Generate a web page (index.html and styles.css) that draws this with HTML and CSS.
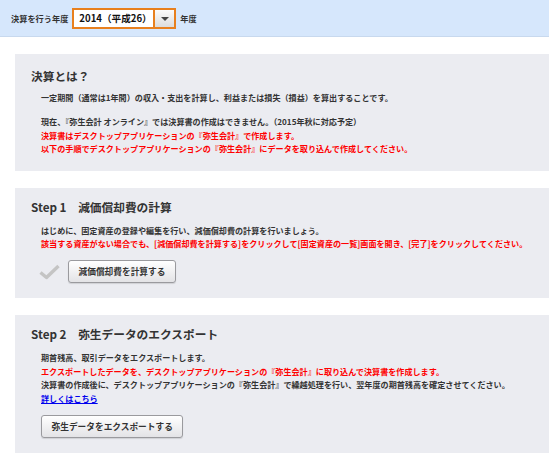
FILE: index.html
```html
<!DOCTYPE html>
<html lang="ja">
<head>
<meta charset="utf-8">
<link rel="stylesheet" href="styles.css">
</head>
<body>
<div class="topbar">
  <span class="label">決算を行う年度</span>
  <div class="select">
    <span class="select-value">2014（平成26）</span>
    <span class="select-btn"><span class="tri"></span></span>
  </div>
  <span class="label">年度</span>
</div>

<div class="card intro">
  <h2 class="title">決算とは？</h2>
  <div class="body">
    <p>一定期間（通常は1年間）の収入・支出を計算し、利益または損失（損益）を算出することです。</p>
    <p class="para">現在、『弥生会計 オンライン』では決算書の作成はできません。（2015年秋に対応予定）<br>
    <span class="red">決算書はデスクトップアプリケーションの『弥生会計』で作成します。</span><br>
    <span class="red">以下の手順でデスクトップアプリケーションの『弥生会計』にデータを取り込んで作成してください。</span></p>
  </div>
</div>

<div class="card step-card">
  <h2 class="title step">Step 1　減価償却費の計算</h2>
  <div class="body">
    <p>はじめに、固定資産の登録や編集を行い、減価償却費の計算を行いましょう。<br>
    <span class="red">該当する資産がない場合でも、[減価償却費を計算する]をクリックして[固定資産の一覧]画面を開き、[完了]をクリックしてください。</span></p>
    <div class="actions">
      <svg class="check" width="21" height="16" viewBox="0 0 21 16"><path d="M1.5 8.5 L7.5 13.5 L19.5 2" fill="none" stroke="#c4c4c4" stroke-width="3.4" stroke-linejoin="round"/></svg>
      <button class="btn">減価償却費を計算する</button>
    </div>
  </div>
</div>

<div class="card step-card">
  <h2 class="title step">Step 2　弥生データのエクスポート</h2>
  <div class="body">
    <p>期首残高、取引データをエクスポートします。<br>
    <span class="red">エクスポートしたデータを、デスクトップアプリケーションの『弥生会計』に取り込んで決算書を作成します。</span><br>
    決算書の作成後に、デスクトップアプリケーションの『弥生会計』で繰越処理を行い、翌年度の期首残高を確定させてください。<br>
    <a href="#" class="link">詳しくはこちら</a></p>
    <div class="actions">
      <button class="btn">弥生データをエクスポートする</button>
    </div>
  </div>
</div>
</body>
</html>
```

FILE: styles.css
```css
html, body {
  margin: 0;
  padding: 0;
  background: #ffffff;
}
body {
  font-family: "Noto Sans CJK JP", "Noto Sans", sans-serif;
  color: #333;
  width: 549px;
  overflow: hidden;
}
.topbar {
  height: 36px;
  background: #d6e7fc;
  border-bottom: 1px solid #c8d9ee;
  display: flex;
  align-items: center;
  padding-left: 11px;
  gap: 4px;
}
.label {
  font-size: 8.2px;
  font-weight: 700;
  color: #333;
}
.select {
  display: flex;
  height: 17px;
  width: 100px;
  border: 2px solid #e8801e;
  background: #fff;
  box-sizing: content-box;
}
.select-value {
  flex: 1;
  font-size: 9.6px;
  font-weight: 700;
  color: #111;
  line-height: 17px;
  padding-left: 5px;
}
.select-btn {
  width: 19px;
  border-left: 2px solid #e8801e;
  background: linear-gradient(#fbfbfb, #dcdcdc);
  display: flex;
  align-items: center;
  justify-content: center;
}
.tri {
  width: 0;
  height: 0;
  border-left: 4px solid transparent;
  border-right: 4px solid transparent;
  border-top: 4px solid #444;
  margin-top: 1px;
}
.card {
  background: #ebecf1;
  margin: 17px 0 0 15px;
}
.intro {
  padding: 13px 16px 15px 16px;
}
.step-card {
  padding: 10px 16px 15px 16px;
}
.title {
  margin: 0 0 7px 0;
  font-size: 11.7px;
  line-height: 17px;
  font-weight: 700;
  color: #333;
}
.step {
  font-weight: 600;
  margin-bottom: 9px;
}
.body {
  padding-left: 10px;
  font-size: 8.1px;
  line-height: 13.5px;
  font-weight: 700;
  color: #333;
}
.body p {
  margin: 0;
  white-space: nowrap;
}
.body p.para {
  margin-top: 10.5px;
}
.red {
  color: #ff0000;
}
.link {
  color: #0000ee;
  text-decoration: underline;
}
.actions {
  display: flex;
  align-items: center;
  gap: 8px;
  margin-top: 9.5px;
}
.check {
  display: block;
  margin-left: -2px;
}
.btn {
  font-family: inherit;
  height: 23px;
  padding: 0 9.5px;
  border: 1px solid #9a9a9e;
  border-radius: 3px;
  background: linear-gradient(#ffffff, #e3e3e6);
  box-shadow: 0 1px 1px rgba(0,0,0,0.12);
  font-size: 8.7px;
  font-weight: 700;
  color: #333;
  margin: 0;
}
```
